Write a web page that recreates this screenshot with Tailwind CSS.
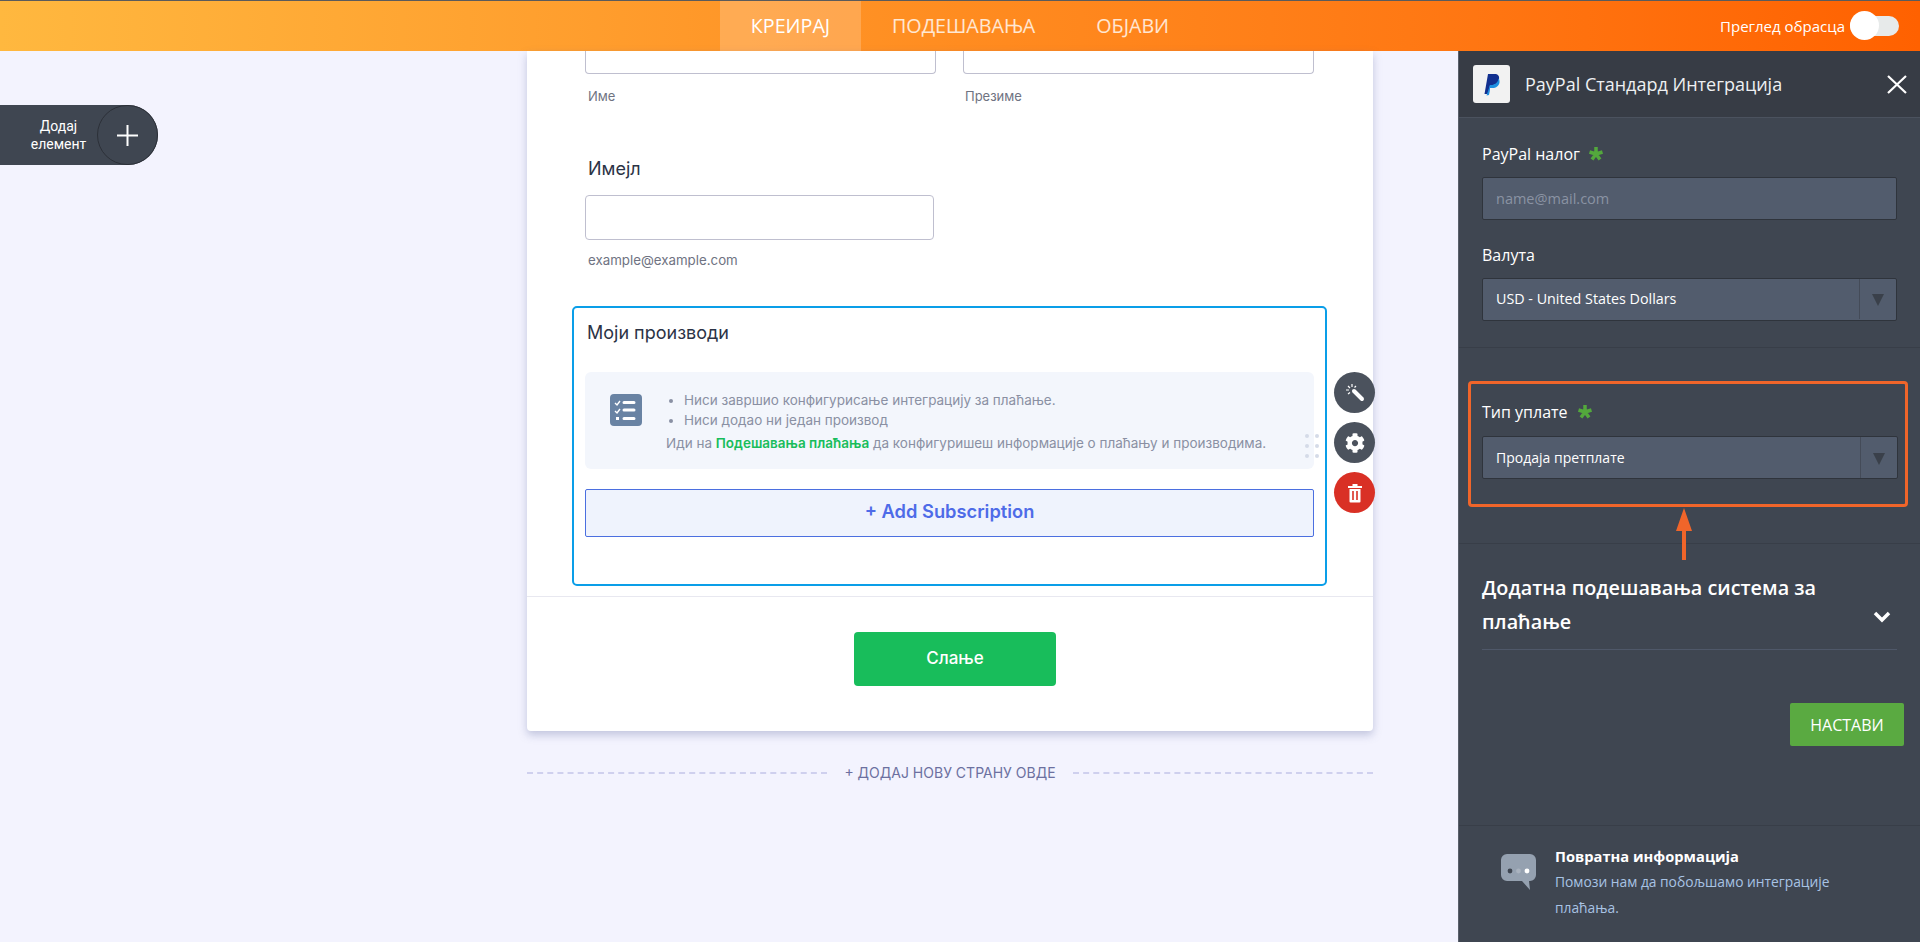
<!DOCTYPE html>
<html lang="sr">
<head>
<meta charset="utf-8">
<script src="https://cdn.jsdelivr.net/npm/@tailwindcss/browser@4"></script>
<title>PayPal</title>
</head>
<body class="relative flex h-[942px] w-[1920px] flex-col overflow-hidden bg-[#f3f3fe] font-['Inter',sans-serif]">

<header class="flex h-[51px] shrink-0 items-stretch border-t border-[#5b5b5b] bg-gradient-to-r from-[#ffb83f] via-[#ff8c20] to-[#ff6100] font-['Open_Sans',sans-serif] text-white">
  <div class="w-[720px] shrink-0"></div>
  <nav class="flex text-[19.700px]">
    <span class="flex w-[141px] items-center justify-center bg-white/20">КРЕИРАЈ</span>
    <span class="flex items-center px-[31px] text-white/80">ПОДЕШАВАЊА</span>
    <span class="flex items-center px-[30px] text-white/80">ОБЈАВИ</span>
  </nav>
  <div class="ml-auto flex items-center pr-[21px]">
    <span class="mr-[5px] text-[15px]">Преглед обрасца</span>
    <span class="relative h-[20px] w-[49px] rounded-full bg-[#e7eaea]">
      <span class="absolute left-0 top-[-5px] h-[29px] w-[29px] rounded-full bg-white"></span>
    </span>
  </div>
</header>

<div class="flex min-h-0 flex-1">
  <div class="w-[527px] shrink-0"></div>

  <main class="flex w-[846px] shrink-0 flex-col">
    <section class="relative flex h-[680px] flex-col rounded-b-[4px] bg-white shadow-[0_4px_8px_rgba(100,110,160,0.35)]">
      <div class="flex gap-[27px] pl-[58px]">
        <div class="w-[351px]">
          <div class="h-[23px] rounded-b-[4px] border border-t-0 border-[#bfbfcf]"></div>
          <p class="ml-[3px] mt-[14px] text-[13px] leading-[16px] text-[#6f7382]">Име</p>
        </div>
        <div class="w-[351px]">
          <div class="h-[23px] rounded-b-[4px] border border-t-0 border-[#bfbfcf]"></div>
          <p class="ml-[2px] mt-[14px] text-[13px] leading-[16px] text-[#6f7382]">Презиме</p>
        </div>
      </div>

      <div class="ml-[58px] mt-[53px] w-[349px]">
        <p class="ml-[3px] text-[18px] leading-[24px] text-[#2c3345]">Имејл</p>
        <div class="mt-[14px] h-[45px] rounded-[4px] border border-[#bfbfcf]"></div>
        <p class="ml-[3px] mt-[12px] text-[13.300px] leading-[16px] text-[#6f7382]">example@example.com</p>
      </div>

      <div class="relative ml-[45px] mt-[38px] h-[280px] w-[755px] rounded-[5px] border-2 border-[#0a9ee8] px-[11px] pt-[13px]">
        <p class="ml-[2px] text-[18px] leading-[24px] text-[#2c3345]">Моји производи</p>
        <div class="relative mt-[27px] flex h-[97px] w-[729px] rounded-[6px] bg-[#f3f6fc] pl-[25px] pt-[22px]">
          <svg class="h-[32px] w-[32px] shrink-0" viewBox="0 0 32 32"><rect width="32" height="32" rx="4" fill="#6983a3"/><path d="M5 9l2 2 3-4M5 17l2 2 3-4" fill="none" stroke="#fff" stroke-width="1.4"/><rect x="6" y="23" width="3" height="3" fill="#fff"/><path d="M14 8.500h10M14 16h10M14 24.500h10" stroke="#fff" stroke-width="3" stroke-linecap="round"/></svg>
          <div class="ml-[24px] mt-[-4px] text-[13.500px] leading-[20px] text-[#8a90a3]">
            <ul class="ml-[18px] list-disc">
              <li>Ниси завршио конфигурисање интеграцију за плаћање.</li>
              <li>Ниси додао ни један производ</li>
            </ul>
            <p class="mt-[3px]">Иди на <span class="font-semibold text-[#18bd5b]">Подешавања плаћања</span> да конфигуришеш информације о плаћању и производима.</p>
          </div>
          <div class="absolute right-[-5px] top-[62px] grid grid-cols-2 gap-x-[6px] gap-y-[6px]">
            <i class="h-[4px] w-[4px] rounded-full bg-[#d5dbe8]"></i><i class="h-[4px] w-[4px] rounded-full bg-[#d5dbe8]"></i>
            <i class="h-[4px] w-[4px] rounded-full bg-[#d5dbe8]"></i><i class="h-[4px] w-[4px] rounded-full bg-[#d5dbe8]"></i>
            <i class="h-[4px] w-[4px] rounded-full bg-[#d5dbe8]"></i><i class="h-[4px] w-[4px] rounded-full bg-[#d5dbe8]"></i>
          </div>
        </div>
        <div class="mt-[20px] flex h-[48px] w-[729px] items-center justify-center rounded-[2px] border border-[#4b6fe0] bg-[#eff3fd] pb-[2px] text-[18.300px] font-semibold text-[#4e6be8]">+ Add Subscription</div>

        <div class="absolute right-[-50px] top-[64px] flex flex-col gap-[9px]">
          <span class="flex h-[41px] w-[41px] items-center justify-center rounded-full bg-[#4b525d]">
            <svg class="h-[20px] w-[20px]" viewBox="0 0 20 20"><path d="M9 8l8 8" stroke="#fff" stroke-width="4" stroke-linecap="round"/><path d="M7 1v3M1 7h3M3 3l2 2M11 3L9.500 4.500M3 11l2-1.500" stroke="#fff" stroke-width="1.200" fill="none"/></svg>
          </span>
          <span class="flex h-[41px] w-[41px] items-center justify-center rounded-full bg-[#4b525d]">
            <svg class="h-[20px] w-[20px]" viewBox="0 0 512 512"><path fill="#fff" d="M487.4 315.7l-42.6-24.6c4.3-23.2 4.3-47 0-70.2l42.6-24.6c4.9-2.8 7.1-8.6 5.500-14-11.100-35.600-30-67.800-54.700-94.600-3.800-4.100-10-5.100-14.800-2.300L380.800 110c-17.900-15.400-38.500-27.300-60.800-35.100V25.800c0-5.600-3.900-10.500-9.400-11.700-36.700-8.200-74.300-7.800-109.200 0-5.500 1.200-9.400 6.100-9.400 11.700V75c-22.200 7.900-42.800 19.800-60.800 35.100L88.700 85.500c-4.900-2.800-11-1.900-14.800 2.300-24.700 26.700-43.600 58.900-54.700 94.600-1.700 5.400.6 11.200 5.500 14L67.300 221c-4.300 23.200-4.300 47 0 70.200l-42.600 24.600c-4.900 2.800-7.100 8.600-5.500 14 11.100 35.600 30 67.800 54.700 94.600 3.800 4.100 10 5.100 14.800 2.300l42.600-24.600c17.900 15.400 38.500 27.300 60.800 35.100v49.200c0 5.600 3.900 10.500 9.400 11.700 36.700 8.200 74.300 7.800 109.200 0 5.500-1.200 9.400-6.100 9.400-11.700v-49.200c22.200-7.900 42.800-19.800 60.800-35.100l42.600 24.600c4.900 2.800 11 1.900 14.800-2.300 24.700-26.700 43.600-58.900 54.700-94.600 1.500-5.500-.7-11.300-5.600-14.100zM256 336c-44.100 0-80-35.900-80-80s35.900-80 80-80 80 35.900 80 80-35.900 80-80 80z"/></svg>
          </span>
          <span class="flex h-[41px] w-[41px] items-center justify-center rounded-full bg-[#d93025]">
            <svg class="h-[20px] w-[16px]" viewBox="0 0 16 20"><path d="M1 3h14v2H1zM5.500 1h5v2h-5z" fill="#fff"/><path d="M2.500 6h11v12.500a1 1 0 0 1-1 1h-9a1 1 0 0 1-1-1z" fill="#fff"/><path d="M6 8v9M10 8v9" stroke="#d93025" stroke-width="1.600"/></svg>
          </span>
        </div>
      </div>

      <div class="mt-[10px] border-t border-[#e8e8f0]"></div>
      <div class="mt-[35px] flex justify-center pl-[10px]">
        <span class="flex h-[54px] w-[202px] items-center justify-center rounded-[4px] bg-[#18bd5b] text-[17px] font-medium text-white">Слање</span>
      </div>
    </section>

    <div class="mt-[31px] flex items-center text-[14px] text-[#6c70a0]">
      <span class="flex-1 border-t-2 border-dashed border-[#cfd0ee]"></span>
      <span class="px-[17px]">+ ДОДАЈ НОВУ СТРАНУ ОВДЕ</span>
      <span class="flex-1 border-t-2 border-dashed border-[#cfd0ee]"></span>
    </div>
  </main>

  <div class="w-[85px] shrink-0"></div>

  <aside class="flex w-[462px] shrink-0 flex-col border-l border-[#5a606b] bg-[#3f4651] font-['Open_Sans',sans-serif] text-white">
    <div class="flex h-[67px] shrink-0 items-center border-b border-[#4b525e] bg-[#373c45] pl-[14px] pr-[13px]">
      <span class="flex h-[38px] w-[37px] items-center justify-center rounded-[3px] bg-[#f2f2f2]">
        <svg class="h-[24px] w-[21px]" viewBox="0 0 21 24"><path d="M8 22H3.500L7 2h6.500c3.500 0 5 2 4.500 5-.6 4-3.500 6-7 6H9z" fill="#12308f"/><path d="M5.500 23.500l2.500-.5 1-7h2.500c3.500 0 6.500-2 7-5.500.2-1.500 0-3-1-4-.5 4-3.500 6.500-7.500 6.500H9z" fill="#1d8fe0"/></svg>
      </span>
      <span class="ml-[15px] text-[18px] text-[#eef0f2]">PayPal Стандард Интеграција</span>
      <svg class="ml-auto h-[19px] w-[20px]" viewBox="0 0 20 19"><path d="M1 1l18 17M19 1L1 18" stroke="#fff" stroke-width="2.200"/></svg>
    </div>

    <div class="border-b border-[#383e48] px-[23px] pb-[26px] pt-[24px]">
      <p class="flex items-center text-[16px] leading-[24px]">PayPal налог
        <svg class="ml-[8px] h-[16px] w-[16px]" viewBox="0 0 16 16"><path d="M8 1v7M8 8L1.500 6M8 8l6.500-2M8 8l-4 5.500M8 8l4 5.500" stroke="#53a83c" stroke-width="3.500"/></svg>
      </p>
      <div class="mt-[11px] flex h-[43px] items-center rounded-[2px] border border-[#2f343c] bg-[#525c6d] pl-[13px] text-[14.500px] text-[#8a93a3]">name@mail.com</div>
      <p class="mt-[23px] text-[16px] leading-[24px]">Валута</p>
      <div class="mt-[11px] flex h-[43px] items-center rounded-[2px] border border-[#2f343c] bg-[#525c6d] pb-[1px] pl-[13px] text-[14.300px]">USD - United States Dollars
        <span class="ml-auto flex h-full w-[37px] items-center justify-center border-l border-[#444b58]"><i class="mt-[2px] h-0 w-0 border-x-[6px] border-t-[12px] border-x-transparent border-t-[#3a404a]"></i></span>
      </div>
    </div>

    <div class="relative pb-[36px] pl-[9px] pr-[12px] pt-[33px]">
      <div class="rounded-[4px] border-[3.500px] border-[#f0652a] pb-[25px] pl-[11px] pr-[7px] pt-[16px]">
        <p class="flex items-center text-[16px] leading-[24px]">Тип уплате
          <svg class="ml-[9px] h-[16px] w-[16px]" viewBox="0 0 16 16"><path d="M8 1v7M8 8L1.500 6M8 8l6.500-2M8 8l-4 5.500M8 8l4 5.500" stroke="#53a83c" stroke-width="3.500"/></svg>
        </p>
        <div class="mt-[12px] flex h-[43px] items-center rounded-[2px] border border-[#2f343c] bg-[#525c6d] pl-[13px] text-[14px]">Продаја претплате
          <span class="ml-auto flex h-full w-[37px] items-center justify-center border-l border-[#444b58]"><i class="mt-[2px] h-0 w-0 border-x-[6px] border-t-[12px] border-x-transparent border-t-[#3a404a]"></i></span>
        </div>
      </div>
      <svg class="absolute left-[217px] top-[160px] h-[52px] w-[16px]" viewBox="0 0 16 52"><path d="M8 0l8 23H10v29H6V23H0z" fill="#f0652a"/></svg>
    </div>

    <div class="border-t border-[#383e48] px-[23px] pt-[27px]">
      <div class="relative border-b border-[#4f5869] pb-[10px] pr-[30px] text-[19.800px] font-semibold leading-[34px]">
        Додатна подешавања система за плаћање
        <svg class="absolute right-[6px] top-[40px] h-[12px] w-[18px]" viewBox="0 0 18 12"><path d="M2 2l7 7 7-7" fill="none" stroke="#fff" stroke-width="3.500"/></svg>
      </div>
    </div>

    <div class="mt-[53px] flex justify-end pr-[16px]">
      <span class="flex h-[43px] w-[114px] items-center justify-center rounded-[2px] bg-[#5aaa41] text-[16px]">НАСТАВИ</span>
    </div>

    <div class="mt-[79px] flex flex-1 border-t border-[#383e48] pl-[41px] pt-[27px]">
      <svg class="h-[37px] w-[37px] shrink-0" viewBox="0 0 37 37"><path d="M7 1h23a6 6 0 0 1 6 6v15a6 6 0 0 1-6 6h-1l1 9-8-9H7a6 6 0 0 1-6-6V7a6 6 0 0 1 6-6z" fill="#95a1b0"/><circle cx="10" cy="18" r="2.400" fill="#3f4651"/><circle cx="18.500" cy="18" r="2.400" fill="#aab3bf"/><circle cx="27" cy="18" r="2.400" fill="#fff"/></svg>
      <div class="ml-[18px] mt-[-10px] w-[320px]">
        <p class="text-[14.700px] font-bold leading-[26px]">Повратна информација</p>
        <p class="text-[13.800px] leading-[26px] text-[#a8c3e4]">Помози нам да побољшамо интеграције плаћања.</p>
      </div>
    </div>
  </aside>
</div>

<div class="absolute left-0 top-[105px] flex h-[60px] w-[158px] items-center rounded-r-full bg-[#3f4651] text-white">
  <span class="w-[97px] pl-[20px] text-center font-['Roboto',sans-serif] text-[14px] leading-[18px]">Додај елемент</span>
  <span class="flex h-[60px] w-[61px] items-center justify-center rounded-full border border-[#2c3038]">
    <svg class="h-[21px] w-[21px]" viewBox="0 0 21 21"><path d="M10.500 0v21M0 10.500h21" stroke="#fff" stroke-width="2"/></svg>
  </span>
</div>
</body>
</html>
